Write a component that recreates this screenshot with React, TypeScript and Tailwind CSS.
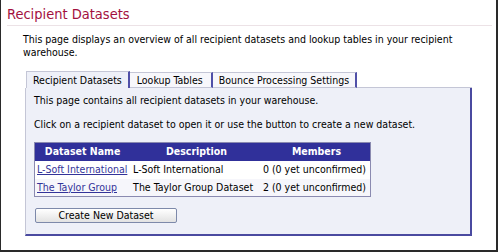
import React from "react";

export default function App() {
  return (
    <div className="w-[498px] h-[252px] bg-white border-l border-r-2 border-b-2 border-[#2a2a2a] font-['DejaVu_Sans_Condensed','DejaVu_Sans',sans-serif] text-[10.5px] leading-[13px] text-black overflow-hidden">
      <div className="pl-[6px] pt-[5px] pr-[4px]">
        <div className="text-[14.5px] leading-[18px] text-[#a3103e]">Recipient Datasets</div>
        <div className="mt-[2px] h-px bg-[#ece2e6]" />
      </div>
      <div className="pl-[22px] pt-[7px] pr-[40px]">
        <p>This page displays an overview of all recipient datasets and lookup tables in your recipient warehouse.</p>
      </div>
      <div className="ml-[24px] mt-[12px] w-[447px]">
        <div className="flex pl-px h-[17px] items-end">
          <div className="h-[17px] px-[6px] pt-[2px] bg-[#eef0f8] border-t border-l border-[#c4c6d6] border-r-2 border-r-[#5050a8]">Recipient Datasets</div>
          <div className="h-[16px] pl-[7px] pr-[8px] pt-[1px] bg-[#f7f7fb] border-t border-[#c4c6d6] border-r-2 border-r-[#5050a8] border-b border-b-[#c4c6d6]">Lookup Tables</div>
          <div className="h-[16px] px-[6px] pt-[1px] bg-[#f7f7fb] border-t border-[#c4c6d6] border-r-2 border-r-[#5050a8] border-b border-b-[#c4c6d6]">Bounce Processing Settings</div>
          <div className="flex-1 border-b border-[#c4c6d6]" />
        </div>
        <div className="h-[148px] bg-[#eef0f8] border-l border-[#c4c6d6] border-r-2 border-r-[#4a4aa0] border-b-2 border-b-[#4a4aa0] px-[8px] pt-[6px]">
          <p>This page contains all recipient datasets in your warehouse.</p>
          <p className="mt-[11px]">Click on a recipient dataset to open it or use the button to create a new dataset.</p>
          <table className="mt-[11px] w-[337px] border border-[#8a8ab0] border-collapse bg-white">
            <thead>
              <tr className="bg-[#30309a] text-white h-[18px]">
                <th className="w-[101px] text-center font-bold">Dataset Name</th>
                <th className="w-[152px] text-center font-bold">Description</th>
                <th className="text-center font-bold">Members</th>
              </tr>
            </thead>
            <tbody>
              <tr className="h-[18px] bg-white">
                <td className="pl-[2px] whitespace-nowrap"><span className="text-[#333399] underline">L-Soft International</span></td>
                <td className="pl-[3px] whitespace-nowrap">L-Soft International</td>
                <td className="pr-[4px] text-right whitespace-nowrap">0 (0 yet unconfirmed)</td>
              </tr>
              <tr className="h-[18px] bg-[#f6f6fb]">
                <td className="pl-[2px] whitespace-nowrap"><span className="text-[#333399] underline">The Taylor Group</span></td>
                <td className="pl-[3px] whitespace-nowrap">The Taylor Group Dataset</td>
                <td className="pr-[4px] text-right whitespace-nowrap">2 (0 yet unconfirmed)</td>
              </tr>
            </tbody>
          </table>
          <button className="block mt-[11px] ml-px w-[142px] h-[15px] border border-[#7d89aa] rounded-[2px] bg-gradient-to-b from-white to-[#e2e2e2] text-[10.5px] leading-[13px] text-black">Create New Dataset</button>
        </div>
      </div>
    </div>
  );
}
